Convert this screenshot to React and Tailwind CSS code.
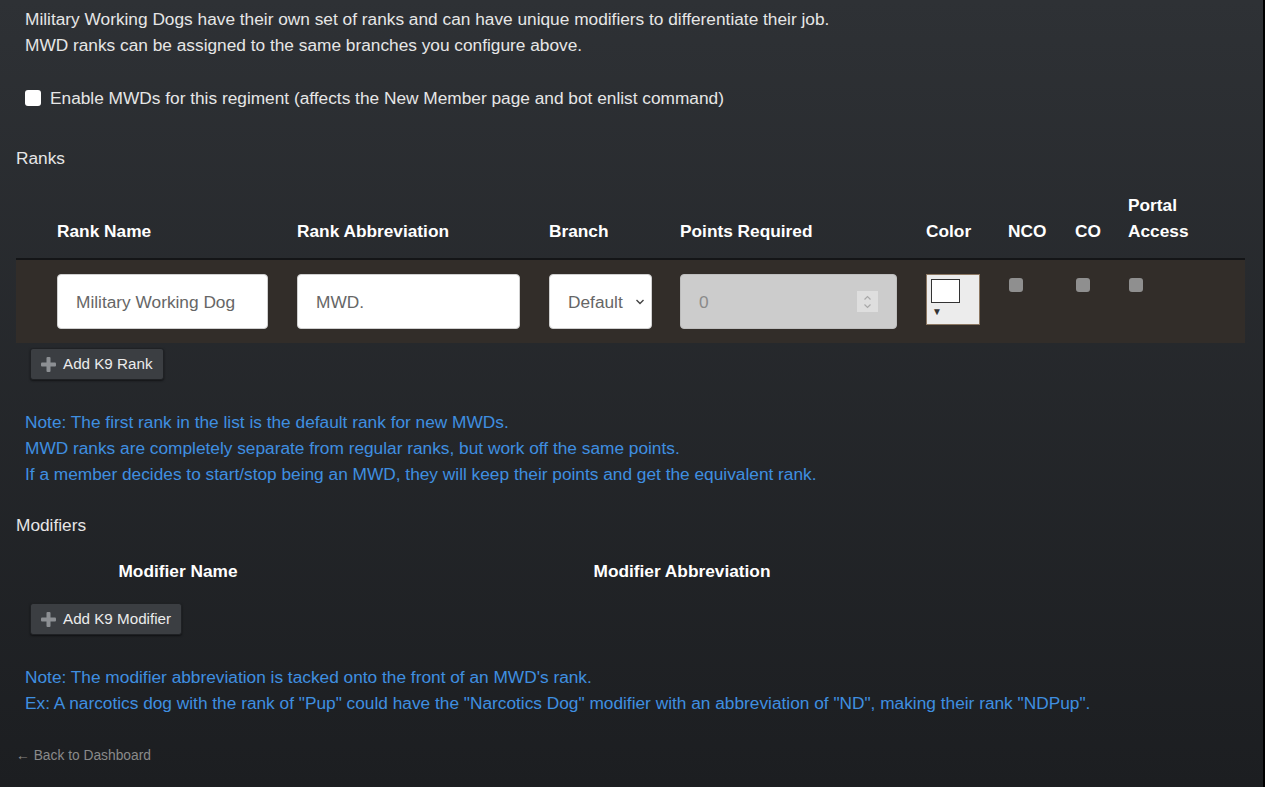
import React from 'react';

const font = { fontFamily: '"Liberation Sans", Arial, sans-serif' };

// Small grey emoji-style plus used on the add buttons
function PlusGlyph() {
  return (
    <svg width="15" height="15" viewBox="0 0 15 15" className="shrink-0">
      <rect x="5.5" y="0" width="4" height="15" rx="1" fill="#8c8f93" />
      <rect x="0" y="5.5" width="15" height="4" rx="1" fill="#8c8f93" />
    </svg>
  );
}

function AddButton({ children }) {
  return (
    <button className="flex h-[32px] items-center gap-[7px] rounded-[3px] border border-[#1f2124] bg-[#3b3e42] pl-[10px] pr-[10px] text-[15.2px] text-[#ececec] shadow-[0_1px_2px_rgba(0,0,0,0.5)]">
      <PlusGlyph />
      <span>{children}</span>
    </button>
  );
}

function GreyBox() {
  return <div className="h-[14px] w-[14px] rounded-[3px] bg-[#8f8f8f]" />;
}

function ColorPicker() {
  return (
    <div className="flex h-[51px] w-[54px] flex-col border border-[#8b7762] bg-[#ececec] pl-[4px] pt-[4px]">
      <div className="h-[24px] w-[29px] border border-[#333] bg-white" />
      <span className="mt-[2px] pl-[1px] text-[10px] leading-[14px] text-[#333]">▼</span>
    </div>
  );
}

function NumberBox() {
  return (
    <div className="flex h-[55px] w-[217px] items-center justify-between rounded-[4px] border border-[#bdbdbd] bg-[#cccccc] pl-[18px] pr-[18px]">
      <span className="text-[#8a8a8a]">0</span>
      <div className="flex h-[21px] w-[21px] flex-col items-center justify-center bg-[#dedede]">
        <svg width="9" height="16" viewBox="0 0 9 16">
          <path d="M1.5 5.5 L4.5 2.5 L7.5 5.5" fill="none" stroke="#a9a9a9" strokeWidth="1.2" />
          <path d="M1.5 10.5 L4.5 13.5 L7.5 10.5" fill="none" stroke="#a9a9a9" strokeWidth="1.2" />
        </svg>
      </div>
    </div>
  );
}

export default function App() {
  const th = 'px-[12px] pt-[12px] pb-[14px] text-left align-bottom font-bold text-white';
  const td = 'px-[12px] py-[14px] align-top';

  return (
    <div
      style={font}
      className="flex min-h-[787px] w-full border-r-2 border-black bg-gradient-to-b from-[#2e3135] to-[#1c1e21] text-[17.3px] leading-[26px] text-[#e6e6e6]"
    >
      <div className="flex w-full flex-col pl-[16px] pr-[18px] pt-[6px]">
        <div className="pl-[9px]">
          <p>Military Working Dogs have their own set of ranks and can have unique modifiers to differentiate their job.</p>
          <p>MWD ranks can be assigned to the same branches you configure above.</p>
          <label className="mt-[27px] flex items-center gap-[9px]">
            <span className="h-[16px] w-[16px] rounded-[3px] bg-white" />
            <span>Enable MWDs for this regiment (affects the New Member page and bot enlist command)</span>
          </label>
        </div>

        <h3 className="mt-[34px]">Ranks</h3>

        <table className="mt-[9px] w-[1229px] border-collapse">
          <thead>
            <tr className="border-b-2 border-[#141517]">
              <th className="w-[29px]" />
              <th className={th + ' w-[240px]'}>Rank Name</th>
              <th className={th + ' w-[252px]'}>Rank Abbreviation</th>
              <th className={th + ' w-[131px]'}>Branch</th>
              <th className={th + ' w-[246px]'}>Points Required</th>
              <th className={th + ' w-[82px]'}>Color</th>
              <th className={th + ' w-[67px]'}>NCO</th>
              <th className={th + ' w-[53px]'}>CO</th>
              <th className={th}>
                Portal
                <br />
                Access
              </th>
            </tr>
          </thead>
          <tbody>
            <tr className="bg-[#322d29]">
              <td />
              <td className={td}>
                <div className="flex h-[55px] w-[211px] items-center rounded-[4px] border border-[#cfcfcf] bg-white pl-[18px] text-[#666]">
                  Military Working Dog
                </div>
              </td>
              <td className={td}>
                <div className="flex h-[55px] w-[223px] items-center rounded-[4px] border border-[#cfcfcf] bg-white pl-[18px] text-[#666]">
                  MWD.
                </div>
              </td>
              <td className={td}>
                <div className="flex h-[55px] w-[103px] items-center justify-between rounded-[4px] border border-[#cfcfcf] bg-white pl-[18px] pr-[6px] text-[#666]">
                  <span>Default</span>
                  <svg width="10" height="8" viewBox="0 0 10 8">
                    <path d="M1.5 2 L5 5.5 L8.5 2" fill="none" stroke="#444" strokeWidth="1.4" />
                  </svg>
                </div>
              </td>
              <td className={td}>
                <NumberBox />
              </td>
              <td className={td}>
                <ColorPicker />
              </td>
              <td className="px-[12px] pt-[18px] align-top">
                <div className="pl-[1px]"><GreyBox /></div>
              </td>
              <td className="px-[12px] pt-[18px] align-top">
                <div className="pl-[1px]"><GreyBox /></div>
              </td>
              <td className="px-[12px] pt-[18px] align-top">
                <div className="pl-[1px]"><GreyBox /></div>
              </td>
            </tr>
          </tbody>
        </table>

        <div className="mt-[5px] pl-[14px]">
          <AddButton>Add K9 Rank</AddButton>
        </div>

        <div className="mt-[29px] pl-[9px] text-[#3f8fe0]">
          <p>Note: The first rank in the list is the default rank for new MWDs.</p>
          <p>MWD ranks are completely separate from regular ranks, but work off the same points.</p>
          <p>If a member decides to start/stop being an MWD, they will keep their points and get the equivalent rank.</p>
        </div>

        <h3 className="mt-[25px]">Modifiers</h3>

        <div className="mt-[20px] flex font-bold text-white">
          <div className="w-[29px]" />
          <div className="w-[266px] text-center">Modifier Name</div>
          <div className="w-[742px] text-center">Modifier Abbreviation</div>
        </div>

        <div className="mt-[19px] pl-[14px]">
          <AddButton>Add K9 Modifier</AddButton>
        </div>

        <div className="mt-[29px] pl-[9px] text-[#3f8fe0]">
          <p>Note: The modifier abbreviation is tacked onto the front of an MWD's rank.</p>
          <p>Ex: A narcotics dog with the rank of "Pup" could have the "Narcotics Dog" modifier with an abbreviation of "ND", making their rank "NDPup".</p>
        </div>

        <a href="#" className="mt-[30px] text-[13.8px] leading-[20px] text-[#8a8a8a]">
          ← Back to Dashboard
        </a>
      </div>
    </div>
  );
}
